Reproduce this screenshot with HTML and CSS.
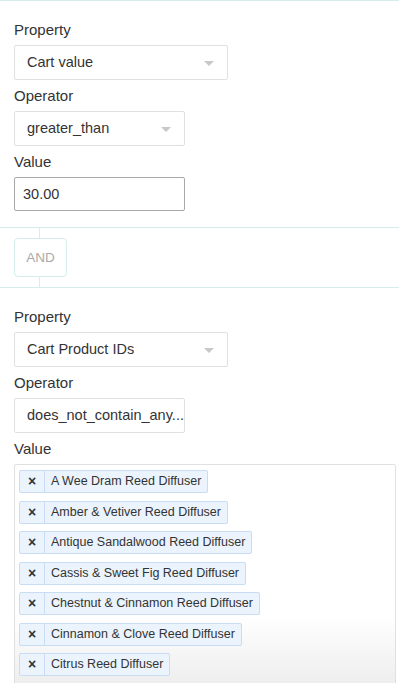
FILE: index.html
```html
<!DOCTYPE html>
<html lang="en">
<head>
    <meta charset="UTF-8">
    <meta name="viewport" content="width=device-width, initial-scale=1.0">
    <title>Conditions</title>
    <link rel="stylesheet" href="styles.css">
</head>
<body>
    <div class="panel">
        <div class="condition">
            <div class="field">
                <label>Property</label>
                <div class="select wide">Cart value<span class="caret"></span></div>
            </div>
            <div class="field">
                <label>Operator</label>
                <div class="select narrow">greater_than<span class="caret"></span></div>
            </div>
            <div class="field">
                <label>Value</label>
                <div class="input">30.00</div>
            </div>
        </div>

        <div class="joiner">
            <div class="stem"></div>
            <div class="and-btn">AND</div>
            <div class="stem"></div>
        </div>

        <div class="condition">
            <div class="field">
                <label>Property</label>
                <div class="select wide">Cart Product IDs<span class="caret"></span></div>
            </div>
            <div class="field">
                <label>Operator</label>
                <div class="select narrow">does_not_contain_any...</div>
            </div>
            <div class="field">
                <label>Value</label>
                <div class="tags">
                    <div class="tag"><span class="tag-x">×</span><span class="tag-label">A Wee Dram Reed Diffuser</span></div>
                    <div class="tag"><span class="tag-x">×</span><span class="tag-label">Amber &amp; Vetiver Reed Diffuser</span></div>
                    <div class="tag"><span class="tag-x">×</span><span class="tag-label">Antique Sandalwood Reed Diffuser</span></div>
                    <div class="tag"><span class="tag-x">×</span><span class="tag-label">Cassis &amp; Sweet Fig Reed Diffuser</span></div>
                    <div class="tag"><span class="tag-x">×</span><span class="tag-label">Chestnut &amp; Cinnamon Reed Diffuser</span></div>
                    <div class="tag"><span class="tag-x">×</span><span class="tag-label">Cinnamon &amp; Clove Reed Diffuser</span></div>
                    <div class="tag"><span class="tag-x">×</span><span class="tag-label">Citrus Reed Diffuser</span></div>
                </div>
            </div>
        </div>
    </div>
</body>
</html>
```

FILE: styles.css
```css
body {
    font-family: "Liberation Sans", Arial, sans-serif;
    margin: 0;
    background-color: #fff;
    color: #333;
    height: 683px;
    overflow: hidden;
}
.panel {
    border-top: 1px solid #d5eeec;
}
.condition {
    padding: 20px 14px 0 14px;
}
.field label {
    display: block;
    font-size: 15px;
    line-height: 18px;
    color: #333;
    margin-bottom: 6px;
}
.field {
    margin-bottom: 7px;
}
.select {
    position: relative;
    box-sizing: border-box;
    height: 35px;
    line-height: 33px;
    padding-left: 12px;
    border: 1px solid #e0e0e0;
    border-radius: 2px;
    font-size: 14.5px;
    color: #333;
    white-space: nowrap;
    overflow: hidden;
}
.wide {
    width: 214px;
}
.narrow {
    width: 171px;
}
.caret {
    position: absolute;
    right: 13px;
    top: 15px;
    border-left: 5px solid transparent;
    border-right: 5px solid transparent;
    border-top: 5px solid #c8c8c8;
}
.input {
    box-sizing: border-box;
    width: 171px;
    height: 34px;
    line-height: 32px;
    padding-left: 8px;
    border: 1px solid #a8a8a8;
    border-radius: 2px;
    font-size: 14.5px;
}
.joiner {
    margin-top: 16px;
    border-top: 1px solid #d5eeec;
    border-bottom: 1px solid #d5eeec;
    padding-left: 14px;
}
.stem {
    width: 1px;
    height: 10px;
    margin-left: 25px;
    background-color: #d5eeec;
}
.and-btn {
    box-sizing: border-box;
    width: 53px;
    height: 39px;
    line-height: 37px;
    text-align: center;
    border: 1px solid #d5eeec;
    border-radius: 4px;
    font-size: 13.5px;
    color: #aaa;
}
.tags {
    box-sizing: border-box;
    width: 382px;
    height: 240px;
    border: 1px solid #e0e0e0;
    border-radius: 2px;
    padding: 5px 4px;
    display: flex;
    flex-direction: column;
    align-items: flex-start;
    gap: 7.5px;
    background: linear-gradient(#fff 150px, #ececec 225px);
}
.tag {
    display: flex;
    height: 23px;
    box-sizing: border-box;
    border: 1px solid #c9dcf3;
    border-radius: 2px;
    background-color: #ebf3fd;
    font-size: 12.5px;
    line-height: 21px;
    color: #333;
}
.tag-x {
    width: 24px;
    text-align: center;
    font-weight: bold;
    font-size: 14px;
    border-right: 1px solid #c9dcf3;
}
.tag-label {
    padding: 0 6px;
}
```
